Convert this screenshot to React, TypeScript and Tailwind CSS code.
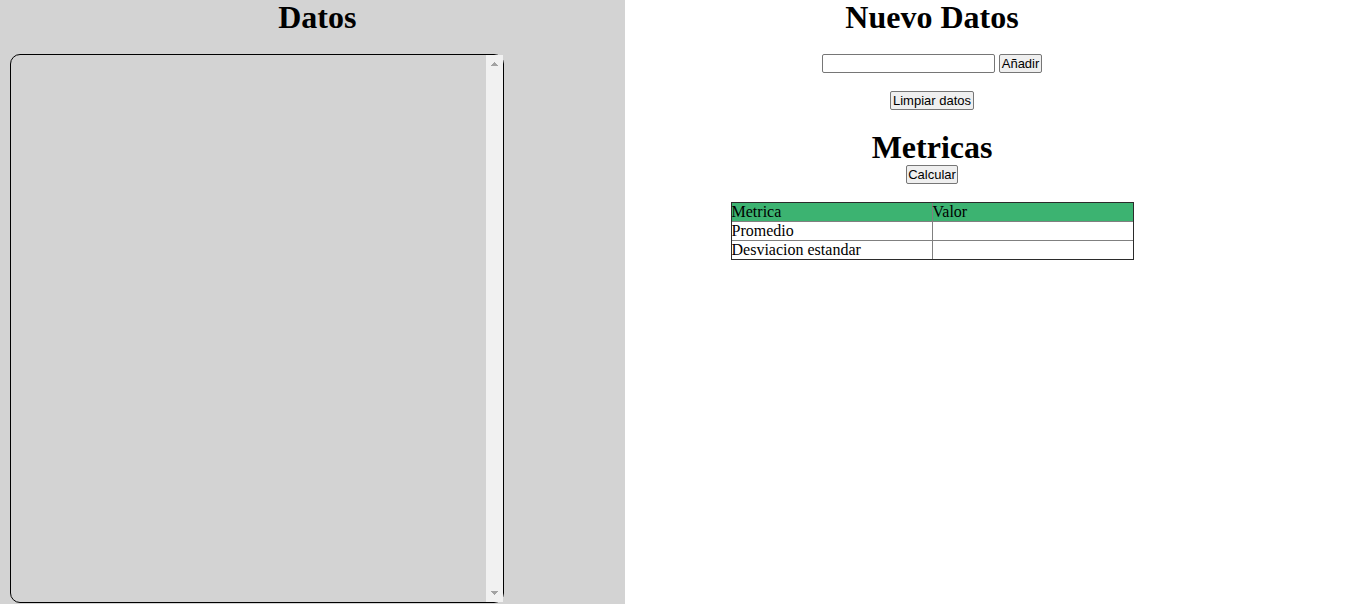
import { useState } from 'react';

const buttonClass =
  'h-[19px] rounded-[2px] border border-[#767676] bg-[#efefef] font-["Liberation_Sans",Arial,sans-serif] text-[13px] leading-4 whitespace-nowrap';

const headingClass = 'pb-px text-center text-[32px] leading-[34px] font-bold';

export default function App() {
  const [value, setValue] = useState('');
  const [data, setData] = useState<number[]>([]);
  const [metrics, setMetrics] = useState<{ mean: string; deviation: string }>({ mean: '', deviation: '' });

  const add = () => {
    const n = Number(value);
    if (value.trim() === '' || Number.isNaN(n)) return;
    setData([...data, n]);
    setValue('');
  };

  const clear = () => {
    setData([]);
    setMetrics({ mean: '', deviation: '' });
  };

  const calculate = () => {
    if (data.length === 0) return;
    const mean = data.reduce((a, b) => a + b, 0) / data.length;
    const variance = data.reduce((a, b) => a + (b - mean) ** 2, 0) / Math.max(data.length - 1, 1);
    setMetrics({ mean: mean.toFixed(2), deviation: Math.sqrt(variance).toFixed(2) });
  };

  return (
    <div className='flex min-h-screen bg-white font-["Liberation_Serif","Times_New_Roman",serif] text-base text-black'>
      <section className="box-content flex w-[45%] flex-col bg-[#d3d3d3] pb-px pl-2.5">
        <h1 className={headingClass}>Datos</h1>
        <div className="mt-[19px] box-content flex w-4/5 flex-1 rounded-[10px] border border-black">
          <ul className="min-w-0 flex-1 px-2">
            {data.map((n, i) => (
              <li key={i}>{n}</li>
            ))}
          </ul>
          <div className="flex w-[17px] flex-col justify-between bg-[#f1f1f1]" aria-hidden="true">
            <svg width="17" height="17" viewBox="0 0 17 17" fill="#a3a3a3" shapeRendering="crispEdges">
              <path d="M8 7h1v1h1v1h1v1h1v1H5v-1h1V9h1V8h1z" />
            </svg>
            <svg width="17" height="17" viewBox="0 0 17 17" fill="#a3a3a3" shapeRendering="crispEdges">
              <path d="M5 6h7v1h-1v1h-1v1H9v1H8V9H7V8H6V7H5z" />
            </svg>
          </div>
        </div>
      </section>

      <main className="flex w-[45%] flex-col items-center">
        <h1 className={headingClass}>Nuevo Datos</h1>
        <form
          className="mt-[19px] flex gap-1"
          onSubmit={(e) => {
            e.preventDefault();
            add();
          }}
        >
          <input
            type="text"
            aria-label="Nuevo dato"
            value={value}
            onChange={(e) => setValue(e.target.value)}
            className='h-[19px] w-[173px] rounded-[2px] border border-[#767676] bg-white px-px font-["Liberation_Sans",Arial,sans-serif] text-[13px]'
          />
          <button type="submit" className={`${buttonClass} px-0.5`}>Añadir</button>
        </form>
        <button type="button" onClick={clear} className={`${buttonClass} mt-[18px] px-0.5`}>Limpiar datos</button>
        <h1 className={`${headingClass} mt-5`}>Metricas</h1>
        <button type="button" onClick={calculate} className={`${buttonClass} px-px`}>Calcular</button>
        <table className="mt-[18px] w-[403px] table-fixed border-separate border-spacing-0 border border-[#2b2b2b] text-left leading-[18px]">
          <thead className="bg-[#3cb371]">
            <tr>
              <th className="w-[201px] border-r border-b border-[#808080] p-0 font-normal">Metrica</th>
              <th className="border-b border-[#808080] p-0 font-normal">Valor</th>
            </tr>
          </thead>
          <tbody>
            <tr>
              <td className="h-[19px] border-r border-b border-[#808080] p-0">Promedio</td>
              <td className="border-b border-[#808080] p-0">{metrics.mean}</td>
            </tr>
            <tr>
              <td className="border-r border-[#808080] p-0">Desviacion estandar</td>
              <td className="p-0">{metrics.deviation}</td>
            </tr>
          </tbody>
        </table>
      </main>
    </div>
  );
}
